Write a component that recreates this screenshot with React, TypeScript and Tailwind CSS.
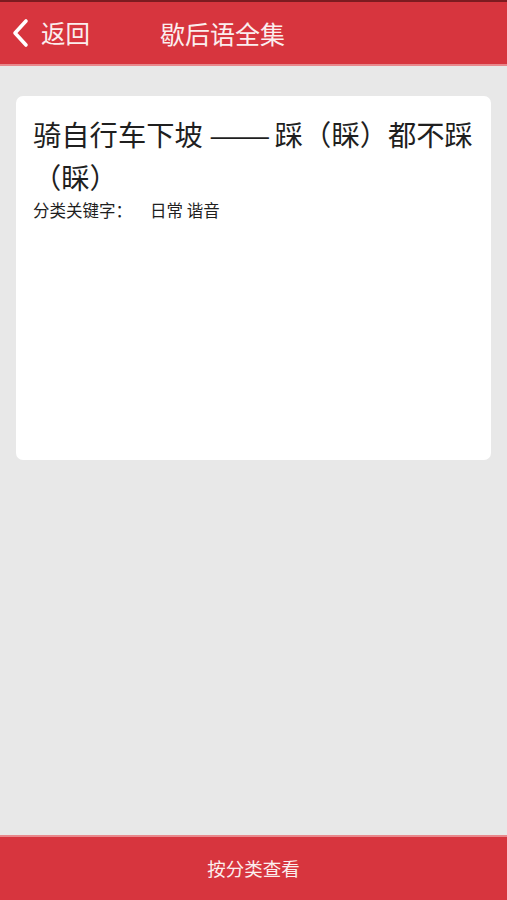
import * as React from 'react';

const FONT = { fontFamily: '"Noto Sans CJK SC", "Noto Sans", sans-serif' };

function BackIcon() {
  return (
    <svg width="18" height="30" viewBox="0 0 18 30" fill="none">
      <path
        d="M15 3 L4 15 L15 27"
        stroke="#fff"
        strokeWidth="3.6"
        strokeLinecap="round"
        strokeLinejoin="round"
      />
    </svg>
  );
}

export default function App() {
  return (
    <div className="flex h-[900px] w-[507px] flex-col bg-[#e8e8e8]" style={FONT}>
      <header className="flex h-[66px] shrink-0 items-center border-t-2 border-b-2 border-t-[#7d1b20] border-b-[#e8888c] bg-[#d7353e] text-[#fbeeee]">
        <div className="ml-[11px] flex items-center">
          <BackIcon />
          <span className="ml-[12px] text-[24.5px] leading-none">返回</span>
        </div>
        <div className="ml-[70px] text-[25px] leading-none">歇后语全集</div>
      </header>

      <main className="flex-1 px-[16px] pt-[30px]">
        <div className="h-[364px] rounded-[7px] bg-white px-[17px] pt-[16px] text-[#1f1f1f]">
          <div className="text-[28.3px] leading-[43px]">
            <div className="flex items-center whitespace-nowrap">
              <span>骑自行车下坡</span>
              <span className="ml-[8px] inline-flex w-[58px] justify-center">
                <span className="inline-block origin-center scale-x-[1.3]">——</span>
              </span>
              <span className="ml-[6px]">踩（睬）都不踩</span>
            </div>
            <div>（睬）</div>
          </div>
          <div className="text-[16.5px] leading-[24px]">
            分类关键字：<span className="ml-[18px]">日常 谐音</span>
          </div>
        </div>
      </main>

      <footer className="flex h-[65px] shrink-0 items-center justify-center border-t-2 border-t-[#e8888c] bg-[#d7353e] text-[18.5px] text-[#fbeeee]">
        按分类查看
      </footer>
    </div>
  );
}
